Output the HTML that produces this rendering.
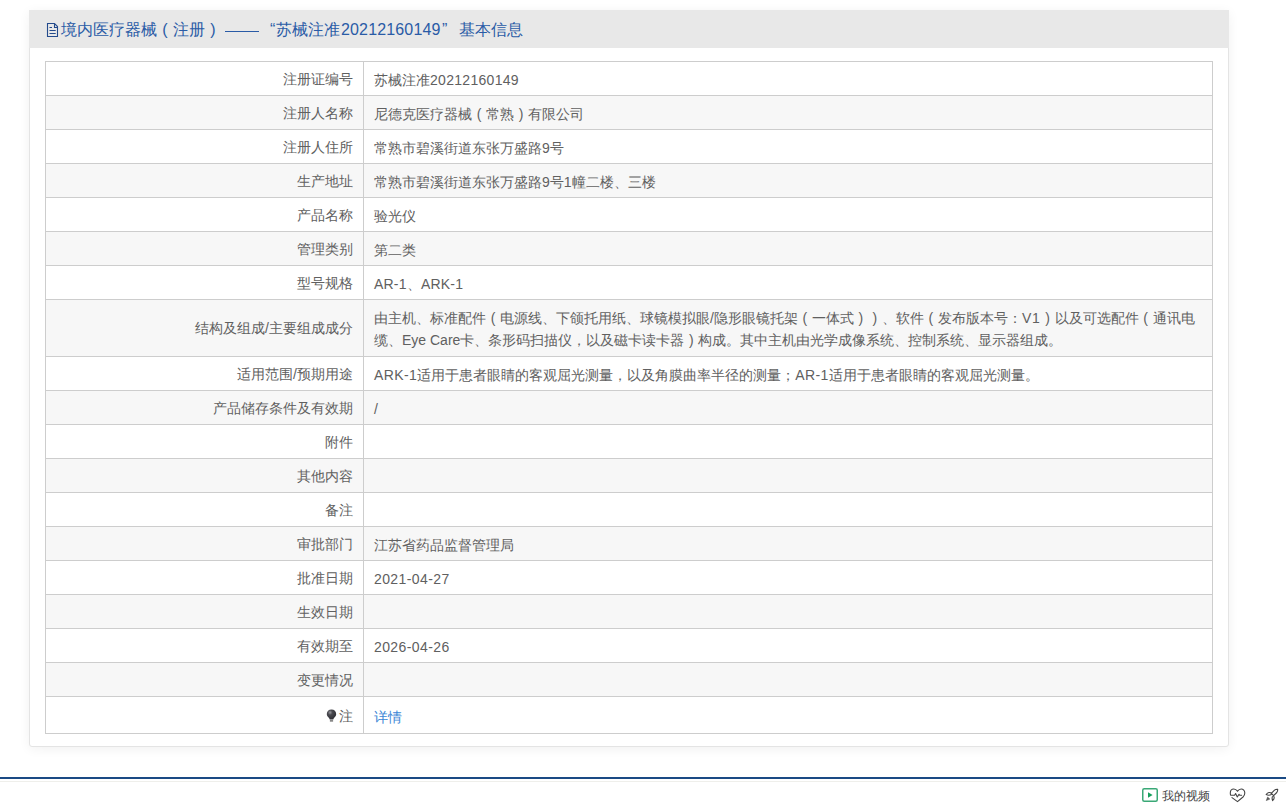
<!DOCTYPE html>
<html><head><meta charset="utf-8">
<style>
*{margin:0;padding:0;box-sizing:border-box}
html,body{width:1286px;height:803px;overflow:hidden;background:#fff;font-family:"Liberation Sans",sans-serif}
.panel{position:absolute;left:29px;top:10px;width:1200px;height:737px;background:#fff;border:1px solid #e4e4e4;border-radius:3px;box-shadow:0 2px 12px rgba(0,0,0,0.06)}
.hd{position:absolute;left:-1px;top:-1px;right:-1px;height:38px;background:#e8e8e8;color:#2a5ba6;font-size:16px;line-height:38px;padding-left:17px;white-space:nowrap;border-radius:0}
.hd svg{position:absolute;left:17px;top:12px}
.hd .s{position:absolute;top:1px}
.dash{position:absolute;left:196px;top:21px;width:34px;height:1px;background:#2a5ba6}
.pp{display:inline-block;text-align:center}
table{position:absolute;left:15px;top:50px;width:1168px;border-collapse:collapse;font-size:14px;color:#606060}
td{border:1px solid #cdcdcd;height:34px;padding:0;padding-top:3px}
td.l{width:318px;text-align:right;padding-right:10px}
td.v{padding-left:10px;line-height:22px}
tr.g td{background:#f7f7f7}
tr.tall td{padding-top:7px;padding-bottom:5px;height:57px}
tr.last td{height:37px}
.n{letter-spacing:.4px}
.pc{display:inline-block;width:14px;text-align:center}
a{color:#3b86d6;text-decoration:none}
.ft{position:absolute;left:0;top:777px;width:1286px;height:2px;background:#1a4a84}
.ft2{position:absolute;left:0;top:781px;width:1286px;height:1px;background:#efefeb}
.fi{position:absolute;top:788px;font-size:12px;color:#444;white-space:nowrap}
</style></head><body>
<div class="panel">
<div class="hd"><svg width="14" height="16" viewBox="0 0 14 16"><path d="M1.5 1.5H8.5L11.5 4.5V14.5H1.5Z M8.5 1.5V5.5H11.5" fill="none" stroke="#234a8c" stroke-width="1.1" stroke-linejoin="miter"/><path d="M3.5 5.5H6M3.5 8.5H9.7M3.5 11.5H9.7" stroke="#234a8c" stroke-width="1.1"/></svg><span class="s" style="left:32px">境内医疗器械</span><span class="s pp" style="left:128px;width:16px">(</span><span class="s" style="left:144px">注册</span><span class="s pp" style="left:176px;width:16px">)</span><i class="dash"></i><span class="s" style="left:241px">“</span><span class="s" style="left:247px">苏械注准</span><span class="s" style="left:312px;letter-spacing:.15px">20212160149</span><span class="s" style="left:413px">”</span><span class="s" style="left:430px">基本信息</span></div>
<table>
<tr><td class="l">注册证编号</td><td class="v">苏械注准<span class="n" style="letter-spacing:.3px">20212160149</span></td></tr>
<tr class="g"><td class="l">注册人名称</td><td class="v">尼德克医疗器械<span class="pc">(</span>常熟<span class="pc">)</span>有限公司</td></tr>
<tr><td class="l">注册人住所</td><td class="v">常熟市碧溪街道东张万盛路9号</td></tr>
<tr class="g"><td class="l">生产地址</td><td class="v">常熟市碧溪街道东张万盛路9号1幢二楼、三楼</td></tr>
<tr><td class="l">产品名称</td><td class="v">验光仪</td></tr>
<tr class="g"><td class="l">管理类别</td><td class="v">第二类</td></tr>
<tr><td class="l">型号规格</td><td class="v"><span class="n" style="letter-spacing:.2px">AR-1、ARK-1</span></td></tr>
<tr class="g tall"><td class="l">结构及组成/主要组成成分</td><td class="v">由主机、标准配件<span class="pc">(</span>电源线、下颌托用纸、球镜模拟眼/隐形眼镜托架<span class="pc">(</span>一体式<span class="pc">)</span><span class="pc">)</span>、软件<span class="pc">(</span>发布版本号：<span class="n" style="letter-spacing:.8px">V1</span><span class="pc">)</span>以及可选配件<span class="pc">(</span>通讯电缆、Eye Care卡、条形码扫描仪，以及磁卡读卡器<span class="pc">)</span>构成。其中主机由光学成像系统、控制系统、显示器组成。</td></tr>
<tr><td class="l">适用范围/预期用途</td><td class="v"><span class="n">ARK-1</span>适用于患者眼睛的客观屈光测量，以及角膜曲率半径的测量；<span class="n">AR-1</span>适用于患者眼睛的客观屈光测量。</td></tr>
<tr class="g"><td class="l">产品储存条件及有效期</td><td class="v">/</td></tr>
<tr><td class="l">附件</td><td class="v"></td></tr>
<tr class="g"><td class="l">其他内容</td><td class="v"></td></tr>
<tr><td class="l">备注</td><td class="v"></td></tr>
<tr class="g"><td class="l">审批部门</td><td class="v">江苏省药品监督管理局</td></tr>
<tr><td class="l">批准日期</td><td class="v"><span class="n">2021-04-27</span></td></tr>
<tr class="g"><td class="l">生效日期</td><td class="v"></td></tr>
<tr><td class="l">有效期至</td><td class="v"><span class="n">2026-04-26</span></td></tr>
<tr class="g"><td class="l">变更情况</td><td class="v"></td></tr>
<tr class="last"><td class="l"><svg width="11" height="13" viewBox="0 0 11 13" style="vertical-align:-1px;margin-right:2px"><defs><radialGradient id="bg" cx="0.35" cy="0.3" r="0.7"><stop offset="0" stop-color="#9a9aa0"/><stop offset="0.35" stop-color="#4a4a50"/><stop offset="1" stop-color="#2e2e34"/></radialGradient></defs><path d="M5.5 0.5C2.7 0.5 0.8 2.5 0.8 4.9c0 1.8 1.1 2.9 2 3.8.6.6.9 1.2.9 1.8h3.6c0-.6.3-1.2.9-1.8.9-.9 2-2 2-3.8C10.2 2.5 8.3.5 5.5.5z" fill="url(#bg)"/><rect x="3.9" y="11.3" width="3.2" height="1.2" fill="#555"/></svg>注</td><td class="v"><a>详情</a></td></tr>
</table>
</div>
<div class="ft"></div><div class="ft2"></div>
<svg style="position:absolute;left:1142px;top:788px" width="16" height="14" viewBox="0 0 16 14"><rect x="0.75" y="0.75" width="14.5" height="12.5" rx="1.5" fill="none" stroke="#3aa876" stroke-width="1.5"/><path d="M6 4.2v5.6l4.6-2.8z" fill="#17a05d"/></svg>
<div class="fi" style="left:1162px">我的视频</div>
<svg style="position:absolute;left:1229px;top:788px" width="17" height="15" viewBox="0 0 17 15"><path d="M3 9.6L8.5 13.6L14 9C15.2 7.8 15.8 6.6 15.8 5C15.8 2.7 14.2 1 12.2 1C10.6 1 9.4 1.9 8.5 3.3C7.6 1.9 6.4 1 4.8 1C2.8 1 1.3 2.7 1.3 5C1.3 5.8 1.4 6.5 1.6 7.2H5.6L6.6 5.5L8.3 9L10 6.3L10.8 7.3H12.6" fill="none" stroke="#444" stroke-width="1.1" stroke-linejoin="round" stroke-linecap="round"/></svg>
<svg style="position:absolute;left:1264px;top:788px" width="16" height="14" viewBox="0 0 16 14"><path d="M13.7 1.3C12.5 1.2 11.3 1.5 10.5 2.2L7.3 5.4L9.6 7.7L12.8 4.5C13.5 3.7 13.8 2.5 13.7 1.3Z" fill="none" stroke="#444" stroke-width="1.1" stroke-linejoin="round"/><path d="M7.6 5.2C6 3.9 3.8 4.3 2.2 6.6C3.8 7.4 5.8 7.3 7.4 6.6M9.6 7.9C10.5 9.5 10.3 11.2 8.6 12.6C8 11.2 8 9.8 8.4 8.6" fill="none" stroke="#444" stroke-width="1.1" stroke-linejoin="round" stroke-linecap="round"/><path d="M3.6 9L5.8 11.1L2.3 12.6Z" fill="#555" stroke="#555" stroke-width=".6" stroke-linejoin="round"/></svg>
</body></html>
